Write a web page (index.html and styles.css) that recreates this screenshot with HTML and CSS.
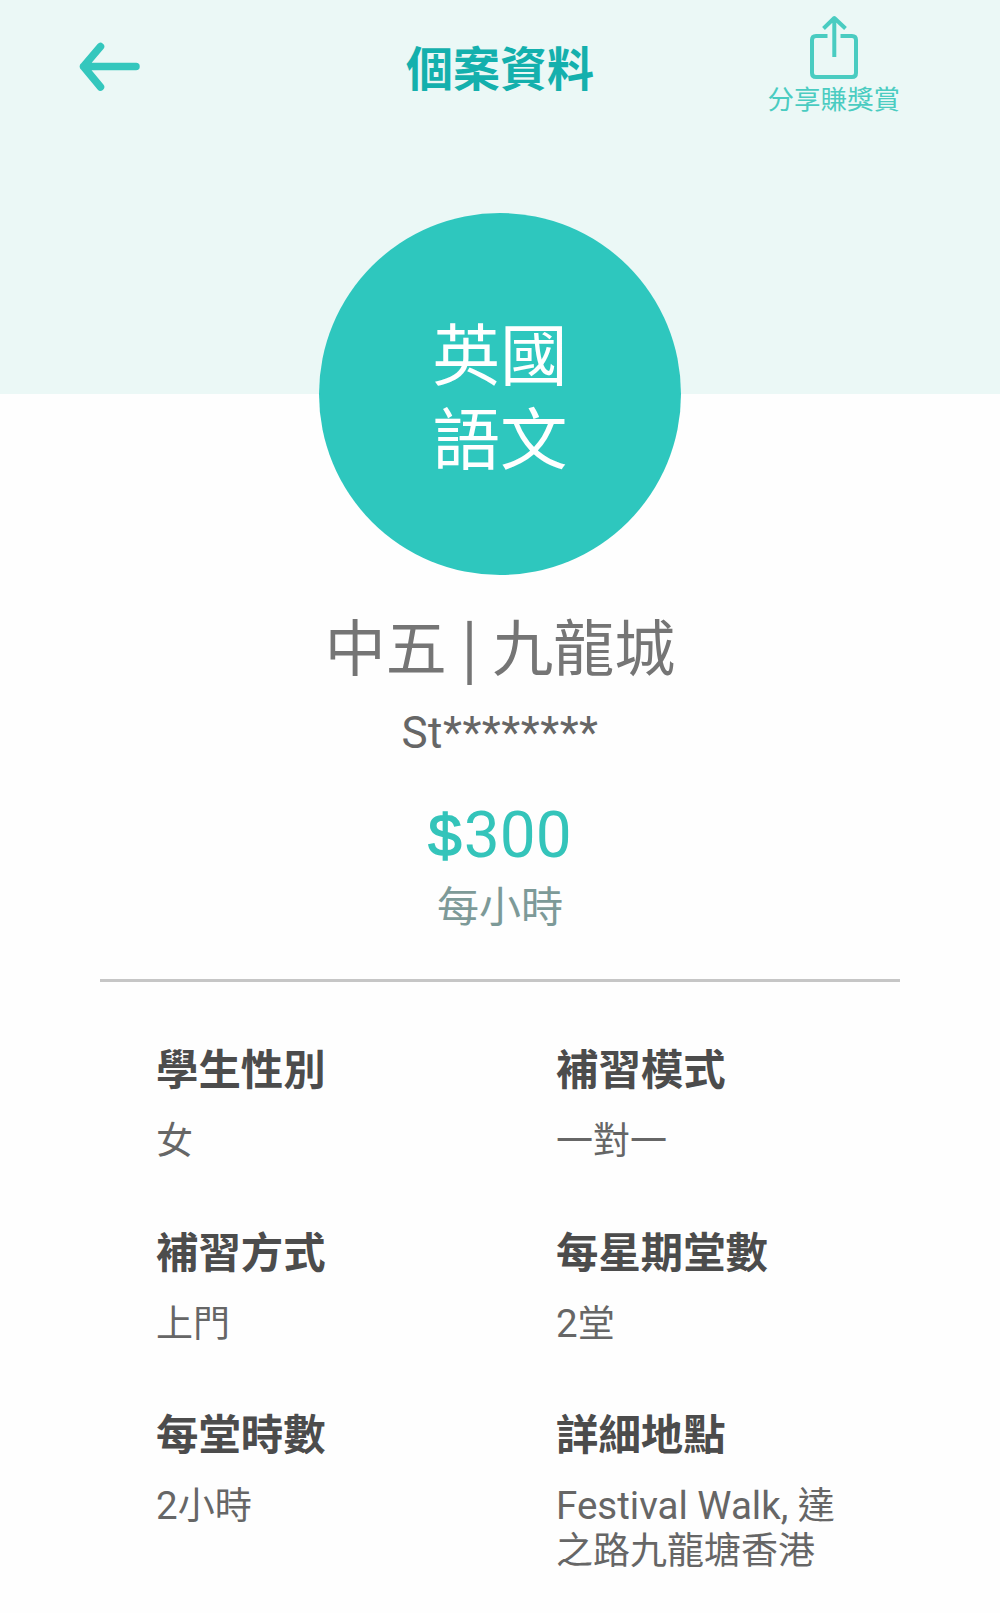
FILE: index.html
```html
<!DOCTYPE html>
<html lang="zh-HK">
<head>
<meta charset="UTF-8">
<meta name="viewport" content="width=device-width, initial-scale=1">
<title>個案資料</title>
<link rel="stylesheet" href="styles.css">
</head>
<body>

<header class="topbar">
  <a class="back" href="#" aria-label="返回">
    <svg width="64" height="50" viewBox="0 0 64 50"><path d="M22.5 4.5 L5.5 24.5 L22.5 45 M5.5 24.5 H58"/></svg>
  </a>
  <h1>個案資料</h1>
  <a class="share" href="#">
    <svg width="50" height="66" viewBox="0 0 50 66"><path d="M18.5 22 H7 Q3 22 3 26 V59 Q3 63 7 63 H43 Q47 63 47 59 V26 Q47 22 43 22 H31.5"/><path d="M25.3 43 V4 M14.5 14.5 L25.3 4 L36.5 14.5"/></svg>
    <span>分享賺獎賞</span>
  </a>
</header>

<main>
  <div class="subject">英國<br>語文</div>
  <h2>中五 <span class="bar">|</span> 九龍城</h2>
  <p class="name">St********</p>
  <p class="price"><span class="sign">$</span>300</p>
  <p class="unit">每小時</p>

  <dl class="details">
    <div><dt>學生性別</dt><dd>女</dd></div>
    <div><dt>補習模式</dt><dd>一對一</dd></div>
    <div><dt>補習方式</dt><dd>上門</dd></div>
    <div><dt>每星期堂數</dt><dd><span class="latin">2</span>堂</dd></div>
    <div><dt>每堂時數</dt><dd><span class="latin">2</span>小時</dd></div>
    <div><dt>詳細地點</dt><dd><span class="latin">Festival Walk, </span>達<br>之路九龍塘香港</dd></div>
  </dl>
</main>

</body>
</html>
```
FILE: styles.css
```css
* { box-sizing: border-box; }
body { margin: 0; color: #666; background-color: #fefefe;
       font-family: Roboto, "Noto Sans CJK TC", sans-serif; }
h1, h2, p, dl, dd { margin: 0; font-weight: normal; }
svg { display: block; fill: none; stroke: #34c7bd;
      stroke-linecap: round; stroke-linejoin: round; }
a { color: #4accc1; text-decoration: none; }

.topbar { display: grid; grid-template-columns: 1fr 200px 1fr;
          height: 394px; padding: 0 100px;
          background-color: #ebf8f6; }
.back { margin-left: -22px; padding-top: 42px; }
.back svg { stroke-width: 7.5; }
.topbar h1 { padding-top: 35px; font-size: 47px; line-height: 70px;
             font-weight: 700; color: #14b0ad; text-align: center;
             white-space: nowrap; }
.share { justify-self: end; padding-top: 14px; text-align: center;
         font-size: 26.5px; line-height: 40px; }
.share svg { margin: 0 auto; stroke: #4accc1; stroke-width: 4;
             stroke-linecap: butt; }

main { display: flex; flex-direction: column; align-items: center;
       margin-top: -181px; }
.subject { display: flex; align-items: center; justify-content: center;
           width: 362px; height: 362px; padding-top: 10px; border-radius: 50%;
           background-color: #2ec7be; color: #fff;
           font-size: 67.5px; line-height: 84px; }
h2 { height: 88px; margin-top: 26px;
     font-family: "Noto Sans CJK TC", sans-serif;
     font-size: 61px; line-height: 88px; color: #757575; word-spacing: 1px; }
h2 .bar { font-size: 57px; font-weight: 500; line-height: 1;
          vertical-align: 2px; }
.name { margin-top: 13px; font-size: 44px; line-height: 62px;
        letter-spacing: 0.5px; }
.price { height: 74px; margin-top: 35px;
         font-size: 64px; line-height: 74px; color: #34c4ba; }
.price .sign { margin-right: 2px; font-family: "Liberation Sans", sans-serif;
               font-size: 60px; line-height: 1; vertical-align: 1px;
               -webkit-text-stroke: 1.5px; }
.unit { margin-top: 4px; font-size: 42px; line-height: 62px; color: #7d9a98; }

.details { display: grid; grid-template-columns: 400px 1fr;
           width: 800px; margin-top: 40px; padding: 58px 0 0 56px;
           border-top: 3px solid #c6c6c6; }
.details div { min-height: 182.5px; }
dt { font-size: 42.4px; line-height: 62px; font-weight: 700; color: #4c4c4c; }
dd { margin-top: 17px; font-size: 37px; line-height: 45px; }
.latin { font-size: 38.5px; line-height: 1; }
```
